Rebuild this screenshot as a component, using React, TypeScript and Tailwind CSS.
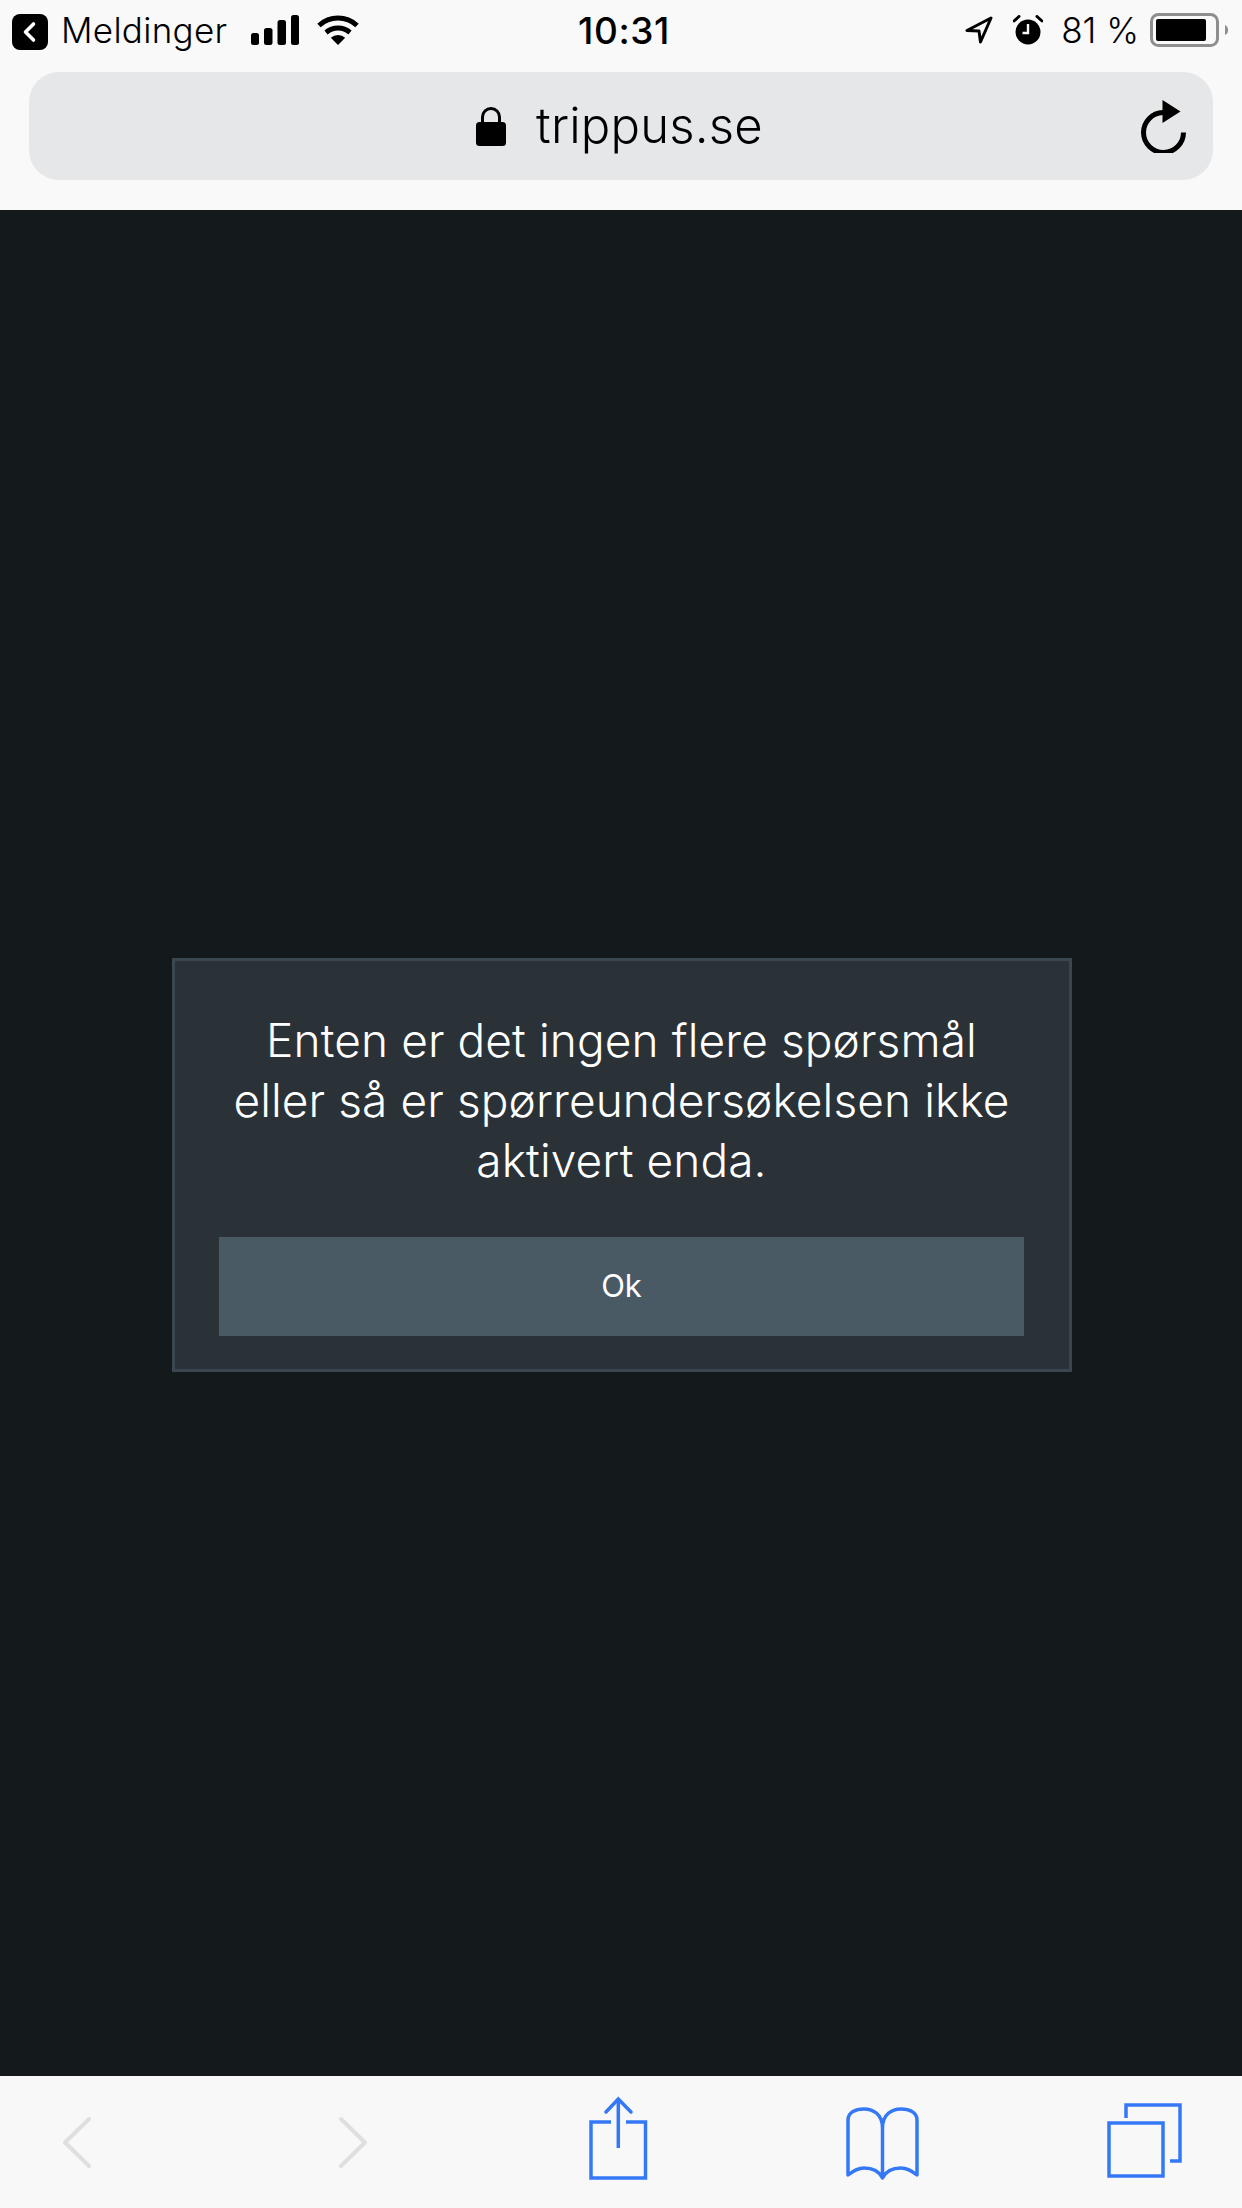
export default function App() {
  return (
    <div className="flex h-[2208px] w-[1242px] flex-col overflow-hidden bg-[#14191c] font-['Inter',sans-serif]">
      {/* Safari top chrome */}
      <header className="h-[210px] bg-[#f9f9f9] text-black">
        <div className="grid h-[72px] grid-cols-[1fr_auto_1fr] items-center pb-[12px] pl-[12px] pr-[14px]">
          <div className="flex items-center">
            <svg className="mt-[4px]" width="36" height="36" viewBox="0 0 36 36">
              <rect width="36" height="36" rx="8" fill="#000" />
              <path d="M21.5 10 13.5 18l8 8" fill="none" stroke="#fff" strokeWidth="3.6" strokeLinecap="round" strokeLinejoin="round" />
            </svg>
            <span className="ml-[13px] text-[35px] font-light leading-none tracking-[0.3px]">Meldinger</span>
            <svg className="ml-[24px]" width="48" height="30" viewBox="0 0 48 30">
              <rect x="0" y="18" width="8" height="12" rx="2.5" />
              <rect x="13" y="13" width="8.500" height="17" rx="2.5" />
              <rect x="26.500" y="5" width="8.500" height="25" rx="2.5" />
              <rect x="40" y="0" width="8" height="30" rx="2.5" />
            </svg>
            <svg className="ml-[18px]" width="42" height="30" viewBox="0 0 42 30">
              <path d="M21 30 13.8 22.8a10.5 10.5 0 0 1 14.4 0z" />
              <path d="M2 10.5a28 28 0 0 1 38 0M9 17.5a18.500 18.500 0 0 1 24 0" fill="none" stroke="#000" strokeWidth="5" />
            </svg>
          </div>
          <span className="ml-[8px] text-[37px] font-medium leading-none tracking-[0.6px]">10:31</span>
          <div className="flex items-center justify-end">
            <svg width="28" height="28" viewBox="0 0 28 28">
              <path d="M26 2 2 14.500l12 .5 1.500 11z" fill="none" stroke="#000" strokeWidth="3" strokeLinejoin="round" />
            </svg>
            <svg className="ml-[20px]" width="30" height="30" viewBox="0 0 30 30">
              <circle cx="15" cy="17" r="12.500" />
              <path d="M15 9v9H9.500" fill="none" stroke="#f9f9f9" strokeWidth="2.400" />
              <path d="M1 6 6 1.500M29 6 24 1.500" stroke="#000" strokeWidth="3" strokeLinecap="round" />
            </svg>
            <span className="ml-[18px] text-[35px] font-light leading-none">81 %</span>
            <svg className="ml-[11px]" width="78" height="34" viewBox="0 0 78 34">
              <rect x="1.500" y="1.500" width="66" height="31" rx="7" fill="none" stroke="#8e8e8e" strokeWidth="3" />
              <rect x="6" y="6" width="50" height="22" rx="2" />
              <path d="M75 12c2.500 1 3 3 3 5s-.5 4-3 5z" fill="#8e8e8e" />
            </svg>
          </div>
        </div>
        <div className="relative mx-[29px] flex h-[108px] items-center justify-center rounded-[30px] bg-[#e6e7e9] pr-[4px]">
          <svg className="mr-[29px]" width="32" height="40" viewBox="0 0 32 40">
            <path d="M7.500 18V11a8.500 8.500 0 0 1 17 0v7" fill="none" stroke="#000" strokeWidth="3" />
            <rect x="1" y="16" width="30" height="24" rx="3.500" />
          </svg>
          <span className="mb-[2px] text-[49px] font-light leading-none tracking-[0.2px]">trippus.se</span>
          <svg className="absolute right-[27px] top-[27px]" width="46" height="54" viewBox="0 0 46 54">
            <path d="M23 13.500a20 20 0 1 0 20.500 20" fill="none" stroke="#000" strokeWidth="5" />
            <path d="M22.500 1 40.500 12.500 22.500 24z" />
          </svg>
        </div>
      </header>

      {/* Page content */}
      <main className="flex flex-1 items-start justify-center pl-[2px] pt-[748px]">
        <div className="h-[414px] w-[900px] border-[3px] border-[#3a4750] bg-[#2a3238] pl-[44px] pr-[45px] pt-[49px] text-center">
          <p className="text-[46px] font-light leading-[60px] tracking-[0.1px] text-white">
            Enten er det ingen flere spørsmål
            <br />
            eller så er spørreundersøkelsen ikke
            <br />
            aktivert enda.
          </p>
          <button className="mt-[47px] h-[99px] w-full bg-[#4a5a64] text-[31px] font-normal text-white">Ok</button>
        </div>
      </main>

      {/* Safari bottom toolbar */}
      <footer className="flex h-[132px] bg-[#f8f8f8]">
        <svg className="ml-[60px] mt-[39px]" width="34" height="56" viewBox="0 0 34 56">
          <path d="M29 4 5 27.500 29 51" fill="none" stroke="#dfdfdf" strokeWidth="4" strokeLinecap="round" strokeLinejoin="round" />
        </svg>
        <svg className="ml-[242px] mt-[39px]" width="34" height="56" viewBox="0 0 34 56">
          <path d="M5 4l24 23.500L5 51" fill="none" stroke="#dfdfdf" strokeWidth="4" strokeLinecap="round" strokeLinejoin="round" />
        </svg>
        <svg className="ml-[219px] mt-[20px]" width="60" height="84" viewBox="0 0 60 84" fill="none" stroke="#3478f6" strokeWidth="3.500">
          <path d="M22 26H2v56h54.500V26H37" />
          <path d="M29.300 3v49" />
          <path d="M17 16 29.300 3l12.700 13" strokeLinecap="round" />
        </svg>
        <svg className="ml-[197px] mt-[30px]" width="76" height="74" viewBox="0 0 76 74" fill="none" stroke="#3478f6" strokeWidth="3.500" strokeLinejoin="round" strokeLinecap="round">
          <path d="M36.500 70V22C36.500 8 27 3 18 3 10 3 2 6 2 14v55c5-4 10-7 16-7 10 0 15.500 4 18.500 10 3-6 8.500-10 18.500-10 6 0 11 3 16 7V14C71 6 63 3 55 3 46 3 36.500 8 36.500 22" />
        </svg>
        <svg className="ml-[185px] mt-[26px]" width="80" height="80" viewBox="0 0 80 80" fill="none" stroke="#3478f6" strokeWidth="3.500">
          <path d="M19 16V3h54v56H63" />
          <rect x="2" y="21" width="54" height="53" />
        </svg>
      </footer>
    </div>
  )
}
